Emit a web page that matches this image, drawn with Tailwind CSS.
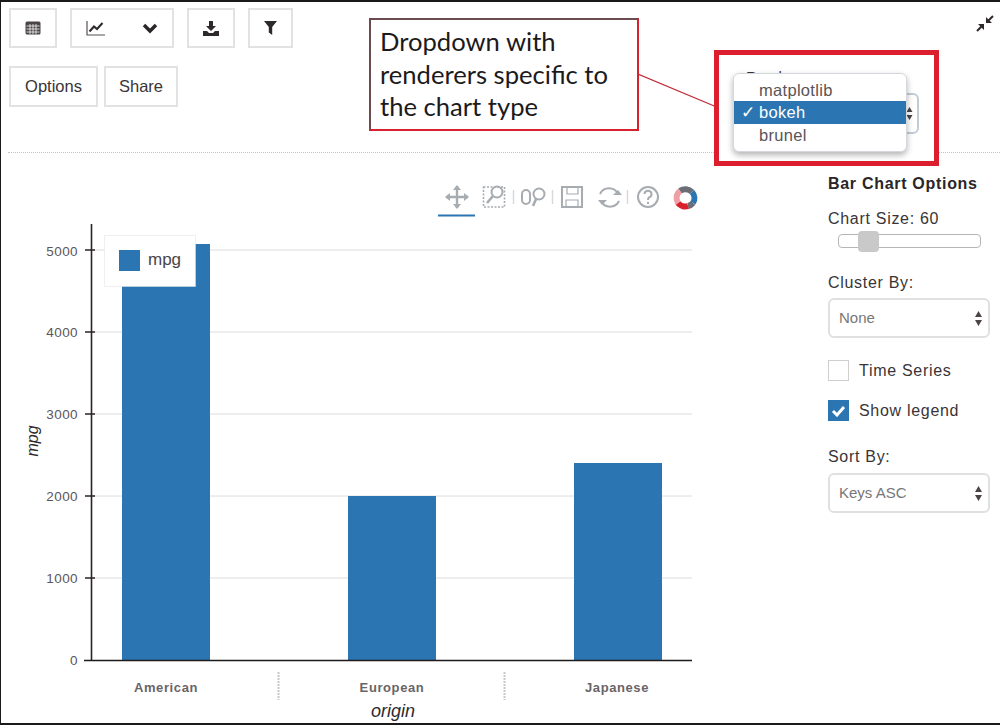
<!DOCTYPE html>
<html lang="en">

<head>
    <meta charset="UTF-8" />
    <title>Bar Chart Options</title>
    <script src="https://cdn.jsdelivr.net/npm/@tailwindcss/browser@4"></script>
</head>

<body class="bg-white">
    <div class="relative w-[1000px] h-[725px] overflow-hidden bg-white border-t-2 border-b-2 border-l border-[#1a1a1a] font-['Liberation_Sans',sans-serif] text-[#3a3436]">
        <!-- ============== TOOLBAR ========= -->
        <div class="pl-2 pt-[6px] flex h-[46px]">
            <button class="w-[48px] h-[40px] flex items-center justify-center border-2 border-[#e2e2e2]">
                <svg width="16" height="14" viewBox="0 0 16 14"><rect x="0.5" y="0.5" width="15" height="13" rx="1.5" fill="#4a4446"/><path d="M1.5 5H14.5M1.5 8H14.5M1.5 11H14.5M5 3V13M8 3V13M11 3V13" stroke="#e8e8e8" stroke-width="0.9"/></svg>
            </button>
            <button class="ml-[13px] w-[104px] h-[40px] flex items-center border-2 border-[#e2e2e2]">
                <svg class="ml-[14px]" width="20" height="16" viewBox="0 0 20 16"><path d="M1 1V15H19" fill="none" stroke="#55505a" stroke-width="1.2"/><path d="M3.5 11.5L8 6.5L11 9L16.5 3" fill="none" stroke="#2e2a2c" stroke-width="2"/></svg>
                <svg class="ml-[36px]" width="16" height="12" viewBox="0 0 16 12"><path d="M2 3L8 9L14 3" fill="none" stroke="#2a2628" stroke-width="3.4"/></svg>
            </button>
            <button class="ml-[13px] w-[48px] h-[40px] flex items-center justify-center border-2 border-[#e2e2e2]">
                <svg width="16" height="15" viewBox="0 0 16 15"><path d="M6 0H10V5H13L8 10L3 5H6Z" fill="#2e2a2c"/><path d="M0 10H4L6 12H10L12 10H16V15H0Z" fill="#2e2a2c"/></svg>
            </button>
            <button class="ml-[13px] w-[45px] h-[40px] flex items-center justify-center border-2 border-[#e2e2e2]">
                <svg width="13" height="14" viewBox="0 0 13 14"><path d="M0 0H13L8.2 6V14L4.8 11.5V6Z" fill="#2e2a2c"/></svg>
            </button>
        </div>
        <div class="pl-2 mt-[18px] flex gap-[6px]">
            <button class="w-[89px] h-[41px] text-[16.5px] border-2 border-[#e2e2e2]">Options</button>
            <button class="w-[74px] h-[41px] text-[16.5px] border-2 border-[#e2e2e2]">Share</button>
        </div>
        <div class="ml-[7px] mt-[45px] border-t border-dotted border-[#c4c4c4]"></div>

        <div class="flex">
            <!-- ============== CHART ========= -->
            <svg class="w-[827px] h-[569px] shrink-0" viewBox="1 153 827 569" font-family="Liberation Sans, sans-serif">
                <!-- grid -->
                <path d="M91 250H692M91 332H692M91 414H692M91 496H692M91 578H692" stroke="#dcdcdc" stroke-width="1" />
                <!-- bars -->
                <rect x="122" y="244" width="88" height="416" fill="#2b76b2" />
                <rect x="348" y="496" width="88" height="164" fill="#2b76b2" />
                <rect x="574" y="463" width="88" height="197" fill="#2b76b2" />
                <!-- axes -->
                <path d="M91.5 224V660" stroke="#2a2426" stroke-width="1.6" />
                <path d="M84 660.5H692" stroke="#1f1a1c" stroke-width="1.6" />
                <path d="M85 250H95M85 332H95M85 414H95M85 496H95M85 578H95" stroke="#2a2426" stroke-width="1.4" />
                <g font-size="13.5" fill="#5c5658" text-anchor="end" letter-spacing="0.4">
                    <text x="78" y="256">5000</text>
                    <text x="78" y="337">4000</text>
                    <text x="78" y="419">3000</text>
                    <text x="78" y="501">2000</text>
                    <text x="78" y="583">1000</text>
                    <text x="78" y="665">0</text>
                </g>
                <text transform="translate(38 441) rotate(-90)" font-size="16" font-style="italic" fill="#2e2a2c" text-anchor="middle">mpg</text>
                <!-- categories -->
                <g font-size="13" font-weight="700" fill="#6a6467" text-anchor="middle" letter-spacing="0.6">
                    <text x="166" y="692">American</text>
                    <text x="392" y="692">European</text>
                    <text x="617" y="692">Japanese</text>
                </g>
                <path d="M278.5 672V700M504.5 672V700" stroke="#c8c8c8" stroke-width="2" stroke-dasharray="2 1" />
                <text x="393" y="717" font-size="18" font-style="italic" fill="#2e2a2c" text-anchor="middle">origin</text>
                <!-- legend -->
                <rect x="104.5" y="235.5" width="91" height="51" fill="#fff" stroke="#dedede" stroke-dasharray="1 1" />
                <rect x="119" y="250" width="21" height="21" fill="#2b76b2" />
                <text x="148" y="265" font-size="17" fill="#4a4446">mpg</text>
                <!-- bokeh tools -->
                <g fill="none" stroke="#a7acb1" stroke-width="2">
                    <path d="M457 186V208M446 197H468" stroke-width="2.4" />
                    <path d="M457 185L453 190H461ZM457 209L453 204H461ZM445 197L450 193V201ZM469 197L464 193V201Z" fill="#a7acb1" stroke="none" />
                    <rect x="483.5" y="187" width="21" height="20" stroke-dasharray="2 1.5" stroke-width="1.6" />
                    <circle cx="497" cy="192" r="5.5" />
                    <path d="M493 196L487 203" stroke-width="2.6" />
                    <rect x="522" y="190" width="8" height="14" rx="4" />
                    <circle cx="539" cy="194" r="5.5" />
                    <path d="M536 199L533 206" stroke-width="2.6" />
                    <path d="M562 187H582V207H562Z" />
                    <path d="M567 187V194H578V187M566 207V200H578V207" stroke-width="1.2" />
                    <path d="M600 194A10 10 0 0 1 618 194M619 201A10 10 0 0 1 601 201" />
                    <path d="M613 195H622L618 190ZM598 200H607L602 205Z" fill="#a7acb1" stroke="none" />
                    <circle cx="648" cy="197" r="10" />
                    <path d="M644.5 194A3.5 3.5 0 1 1 649 197.5Q648 198 648 200" />
                    <path d="M648 202V204" />
                    <path d="M513.5 190V204M552.5 190V204M627.5 190V204" stroke="#d8d8d8" stroke-width="1.4" />
                </g>
                <path d="M438 215.5H475" stroke="#2b76b2" stroke-width="2" />
                <!-- bokeh logo -->
                <g fill="none" stroke-width="6">
                    <path d="M680 191A9 9 0 0 1 692 192" stroke="#6b6f75" />
                    <path d="M692 192A9 9 0 0 1 693 203" stroke="#2b76b2" />
                    <path d="M693 203A9 9 0 0 1 688 206" stroke="#6b6f75" />
                    <path d="M688 206A9 9 0 0 1 678 203" stroke="#d9202c" />
                    <path d="M678 203A9 9 0 0 1 680 191" stroke="#f0a0a4" />
                </g>
            </svg>

            <!-- ============== OPTIONS PANEL ========= -->
            <div class="flex-1 pt-[22px] text-[#3a3436] text-[16px] leading-[18px] tracking-[0.7px]">
                <h2 class="font-bold text-[#2a2628]">Bar Chart Options</h2>
                <p class="mt-[17px]">Chart Size: 60</p>
                <div class="relative ml-[10px] mt-[6px] w-[143px] h-[14px] rounded border border-[#b5b5b5]">
                    <div class="absolute left-[19px] top-[-4px] w-[21px] h-[21px] rounded-sm bg-[#c9c9c9]"></div>
                </div>
                <p class="mt-[26px]">Cluster By:</p>
                <div class="mt-[6px] w-[162px] h-[40px] pl-[9px] pr-[5px] flex items-center justify-between rounded-md border-2 border-[#e0e0e0] text-[#777] text-[15px] tracking-normal">
                    <span>None</span>
                    <svg width="9" height="15" viewBox="0 0 9 15"><path d="M4.5 0L8 6H1ZM4.5 15L8 9H1Z" fill="#4a4446"/></svg>
                </div>
                <label class="mt-[22px] flex items-center gap-[10px]">
                    <span class="w-[21px] h-[21px] border border-[#cfcfcf]"></span>
                    <span>Time Series</span>
                </label>
                <label class="mt-[19px] flex items-center gap-[10px]">
                    <span class="w-[21px] h-[21px] flex items-center justify-center bg-[#2b76b2]">
                        <svg width="15" height="12" viewBox="0 0 15 12"><path d="M2 6L6 10L13 2" fill="none" stroke="#fff" stroke-width="3"/></svg>
                    </span>
                    <span>Show legend</span>
                </label>
                <p class="mt-[27px]">Sort By:</p>
                <div class="mt-[7px] w-[162px] h-[40px] pl-[9px] pr-[5px] flex items-center justify-between rounded-md border-2 border-[#e0e0e0] text-[#777] text-[15px] tracking-normal">
                    <span>Keys ASC</span>
                    <svg width="9" height="15" viewBox="0 0 9 15"><path d="M4.5 0L8 6H1ZM4.5 15L8 9H1Z" fill="#4a4446"/></svg>
                </div>
            </div>
        </div>

        <!-- ============== ANNOTATION, laid over the page ========= -->
        <svg class="absolute left-[637px] top-[70px]" width="85" height="40" viewBox="0 0 85 40"><path d="M0 2L81 36" stroke="#c02a36" stroke-width="1.2"/></svg>
        <div class="absolute left-[368px] top-[16px] w-[270px] h-[113px] pl-[9px] pt-[5px] bg-white border-2 border-t-[#6b4a50] border-l-[#6b4a50] border-r-[#d8202e] border-b-[#d8202e] font-['Lato',sans-serif] text-[25.6px] leading-[32.5px] text-[#1c1a1b]">
            Dropdown with<br />renderers specific to<br />the chart type
        </div>
        <div class="absolute left-[713px] top-[48px] w-[225px] h-[116px] border-[5px] border-[#dc1f2e] bg-white">
            <span class="absolute left-[27px] top-[11px] text-[15px] text-[#3a3436]">Render</span>
            <div class="absolute left-[60px] top-[38px] w-[140px] h-[41px] pr-[4px] flex items-center justify-end rounded-md border-2 border-[#c3ccd6]">
                <svg width="7" height="15" viewBox="0 0 7 15"><path d="M3.5 1L6.5 6H0.5ZM3.5 14L6.5 9H0.5Z" fill="#4a4446"/></svg>
            </div>
            <div class="absolute left-[14px] top-[18px] w-[174px] h-[79px] pt-[5px] rounded-md bg-white border border-[#d4d8dc] shadow-[0_3px_6px_rgba(0,0,0,0.3)] text-[16.5px] leading-[22px] tracking-[0.3px] text-[#5a5456]">
                <div class="pl-[25px]">matplotlib</div>
                <div class="pl-[7px] flex gap-[7px] bg-[#2b76b2] text-white h-[23px]"><span class="w-[11px]">✓</span><span>bokeh</span></div>
                <div class="pl-[25px]">brunel</div>
            </div>
        </div>
        <svg class="absolute left-[975px] top-[13px]" width="18" height="17" viewBox="0 0 18 17"><path d="M17 1L11.5 6.5M1 16L6.5 10.5" stroke="#2e2a2c" stroke-width="2"/><path d="M10 2V8H16ZM8 15V9H2Z" fill="#2e2a2c"/></svg>
    </div>
</body>

</html>
